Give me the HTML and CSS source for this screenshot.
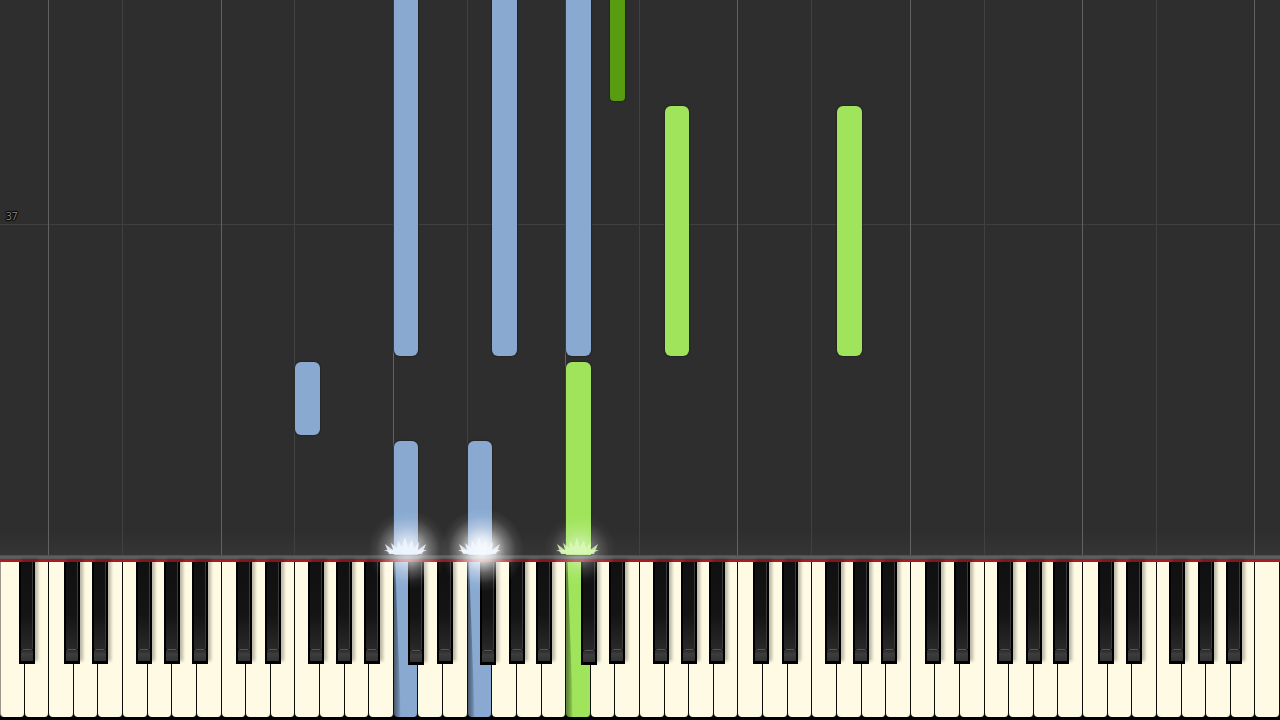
FILE: index.html
```html
<!DOCTYPE html>
<html lang="en">
<head>
<meta charset="utf-8">
<meta name="viewport" content="width=device-width, initial-scale=1">
<title>Piano roll</title>
<link rel="stylesheet" href="styles.css">
</head>
<body>
<main class="player">
  <section class="roll" aria-label="Falling notes">
    <div class="measure"><span class="measure-label">37</span></div>
  </section>
  <div class="rail"></div>
  <section class="keyboard" aria-label="Keyboard">
    <div class="white-keys"></div>
  </section>
  <div class="effects" aria-hidden="true"></div>
</main>
<script src="piano.js"></script>
</body>
</html>
```

FILE: styles.css
```css
* { box-sizing: border-box; }

body {
  margin: 0;
  background: #000;
  font-family: "Open Sans", "Noto Sans", sans-serif;
}

.player {
  position: relative;
  display: flex;
  flex-direction: column;
  min-height: 100vh;
  overflow: hidden;
}

.roll {
  position: relative;
  flex: 1;
  background: linear-gradient(to top, #353535 0, #2e2e2e 24px);
}

/* Free canvas: guides and notes are placed by pitch and time. */
.guide {
  position: absolute;
  top: 0;
  bottom: 0;
  width: 1px;
  margin-left: -1px;
  background: #414141;
}

.guide-c { background: #626262; }

.measure {
  position: absolute;
  top: 40.4%;
  left: 0;
  right: 0;
  height: 1px;
  background: #404040;
}

.measure-label {
  position: absolute;
  bottom: 1px;
  left: 6px;
  font-size: 10px;
  line-height: 16px;
  color: #8c8c8c;
  text-shadow: 1px 0 1px #000, -1px 0 1px #000, 0 1px 1px #000, 0 -1px 1px #000, 0 0 2px #000;
}

.note {
  position: absolute;
  border-radius: 6px;
  box-shadow: 0 0 1px 1px #222a;
}

.from-above { border-top-left-radius: 0; border-top-right-radius: 0; }
.sounding { border-bottom-left-radius: 0; border-bottom-right-radius: 0; }
.blue { background: #89a9d1; }
.green { background: #a0e45b; }
.dark-green { background: #589c12; border-radius: 0 0 4px 4px; }

.rail {
  height: 5px;
  background: linear-gradient(#4d4d4d 0, #626262 2px, #555 4px, #333 5px);
}

.keyboard {
  position: relative;
  height: 160px;
  padding-bottom: 3px;
  border-top: 2px solid #a81c26;
  background: #000;
}

.white-keys {
  display: grid;
  grid-template-columns: repeat(52, minmax(0, 1fr));
  height: 100%;
}

.key {
  margin: 0;
  padding: 0;
  border: 0;
  font: inherit;
}

.white {
  position: relative;
  border-right: 1px solid #0d0d0c;
  border-radius: 0 0 4px 4px;
  background: #fffae3;
}

.white:first-child { border-left: 1px solid #99968a; }

.white.blue { background: #89a9d1; }
.white.green { background: #a0e45b; }

/* Shade cast on a held key by its left neighbour, widening downwards. */
.white.blue::before,
.white.green::before {
  content: "";
  position: absolute;
  inset: 0 auto 0 0;
  width: 7px;
  background: linear-gradient(to right, #0007, #0003 70%, #0000);
  clip-path: polygon(0 0, 20% 0, 100% 100%, 0 100%);
}

.black {
  position: absolute;
  top: 0;
  width: 1.25%;
  height: 102px;
  padding: 0 2px 3px;
  background: #000;
  box-shadow: 3px -3px 3px #0004;
  display: flex;
  flex-direction: column;
  justify-content: flex-end;
}

.black::before {
  content: "";
  flex: 1;
  background: linear-gradient(#101010 0, #141414 60%, #282828 100%);
  border-right: 1px solid #3b3b3b;
}

.black.lowered { height: 103px; }

.cap {
  display: block;
  height: 12px;
  border-top: 1px solid #555;
  border-radius: 3px 3px 0 0;
  background: linear-gradient(#292929 0, #3d3d3d 4px, #303030 12px);
}

.effects {
  position: absolute;
  inset: 0;
  pointer-events: none;
}

.spark {
  position: absolute;
  bottom: 118px;
  width: 96px;
  height: 96px;
  margin-left: -48px;
}
```

FILE: piano.js
```js
const WHITE_COUNT = 52;
const ROLL_HEIGHT = 555;
const unit = 100 / WHITE_COUNT;
const names = ["A", "B", "C", "D", "E", "F", "G"];

// Left edge of the black key that follows each white key, in white-key widths.
const blackOffsets = { A: 0.79, C: 0.59, D: 0.75, F: 0.51, G: 0.67 };

const pressed = { 16: "blue", 19: "blue", 23: "green" };

const notes = [
  { key: 16, top: 0, end: 356, color: "blue from-above" },
  { key: 20, top: 0, end: 356, color: "blue from-above" },
  { key: 23, top: 0, end: 356, color: "blue from-above" },
  { key: 24, top: 0, end: 101, color: "dark-green", sharp: true },
  { key: 27, top: 106, end: 356, color: "green" },
  { key: 34, top: 106, end: 356, color: "green" },
  { key: 12, top: 362, end: 435, color: "blue" },
  { key: 16, top: 441, end: 555, color: "blue sounding" },
  { key: 19, top: 441, end: 555, color: "blue sounding" },
  { key: 23, top: 362, end: 555, color: "green sounding" }
];

const roll = document.querySelector(".roll");
const keyboard = document.querySelector(".keyboard");
const whiteKeys = document.querySelector(".white-keys");
const effects = document.querySelector(".effects");

function add(parent, tag, className) {
  const el = document.createElement(tag);
  el.className = className;
  parent.appendChild(el);
  return el;
}

for (let i = 0; i < WHITE_COUNT; i++) {
  const name = names[i % 7];
  const octave = Math.floor((i + 5) / 7);

  const white = add(whiteKeys, "button", "key white " + (pressed[i] || ""));
  white.type = "button";
  white.setAttribute("aria-label", name + octave);

  if (name === "C" || name === "F") {
    const guide = add(roll, "div", name === "C" ? "guide guide-c" : "guide");
    guide.style.left = i * unit + "%";
  }

  if (name in blackOffsets && i < WHITE_COUNT - 1) {
    const black = add(keyboard, "button", "key black " + (pressed[i] ? "lowered" : ""));
    black.type = "button";
    black.setAttribute("aria-label", name + " sharp " + octave);
    black.style.left = (i + blackOffsets[name]) * unit + "%";
    add(black, "span", "cap");
  }
}

for (const n of notes) {
  const el = add(roll, "div", "note " + n.color);
  const start = n.sharp ? n.key + 0.78 : n.key;
  el.style.left = start * unit + "%";
  el.style.width = (n.sharp ? 0.6 : 1) * unit + "%";
  el.style.top = n.top / ROLL_HEIGHT * 100 + "%";
  el.style.height = (n.end - n.top) / ROLL_HEIGHT * 100 + "%";
}

// Each hit is a soft glow with a fan of thin blades at the rail.
function spark(key, tint, radius, strength) {
  const holder = add(effects, "div", "spark");
  holder.style.left = (key + 0.5) * unit + "%";
  holder.innerHTML = `
    <svg viewBox="0 0 96 96" width="96" height="96">
      <defs><radialGradient id="glow${key}">
        <stop offset="0" stop-color="#fff" stop-opacity="${strength}"/>
        <stop offset=".3" stop-color="#fff" stop-opacity="${strength * 0.75}"/>
        <stop offset=".55" stop-color="#fff" stop-opacity="${strength * 0.35}"/>
        <stop offset=".8" stop-color="#fff" stop-opacity="${strength * 0.08}"/>
        <stop offset="1" stop-color="#fff" stop-opacity="0"/>
      </radialGradient></defs>
      <circle cx="50" cy="44" r="${radius}" fill="url(#glow${key})"/>
      <g fill="${tint}" fill-opacity=".85">
        <path d="M31 48 L27 38 L35 44 L33 37 L39 42 L40 35 L44 41 L47 31 L50 41 L54 34 L56 42 L61 36 L60 44 L68 38 L64 48 Z"/>
        <path d="M35 48 L26 44 L37 44 Z M60 48 L69 44 L60 44 Z"/>
      </g>
    </svg>`;
}

spark(16, "#f0f6ff", 40, 0.8);
spark(19, "#f3f8ff", 42, 1);
spark(23, "#d9f8b8", 36, 0.45);
```
